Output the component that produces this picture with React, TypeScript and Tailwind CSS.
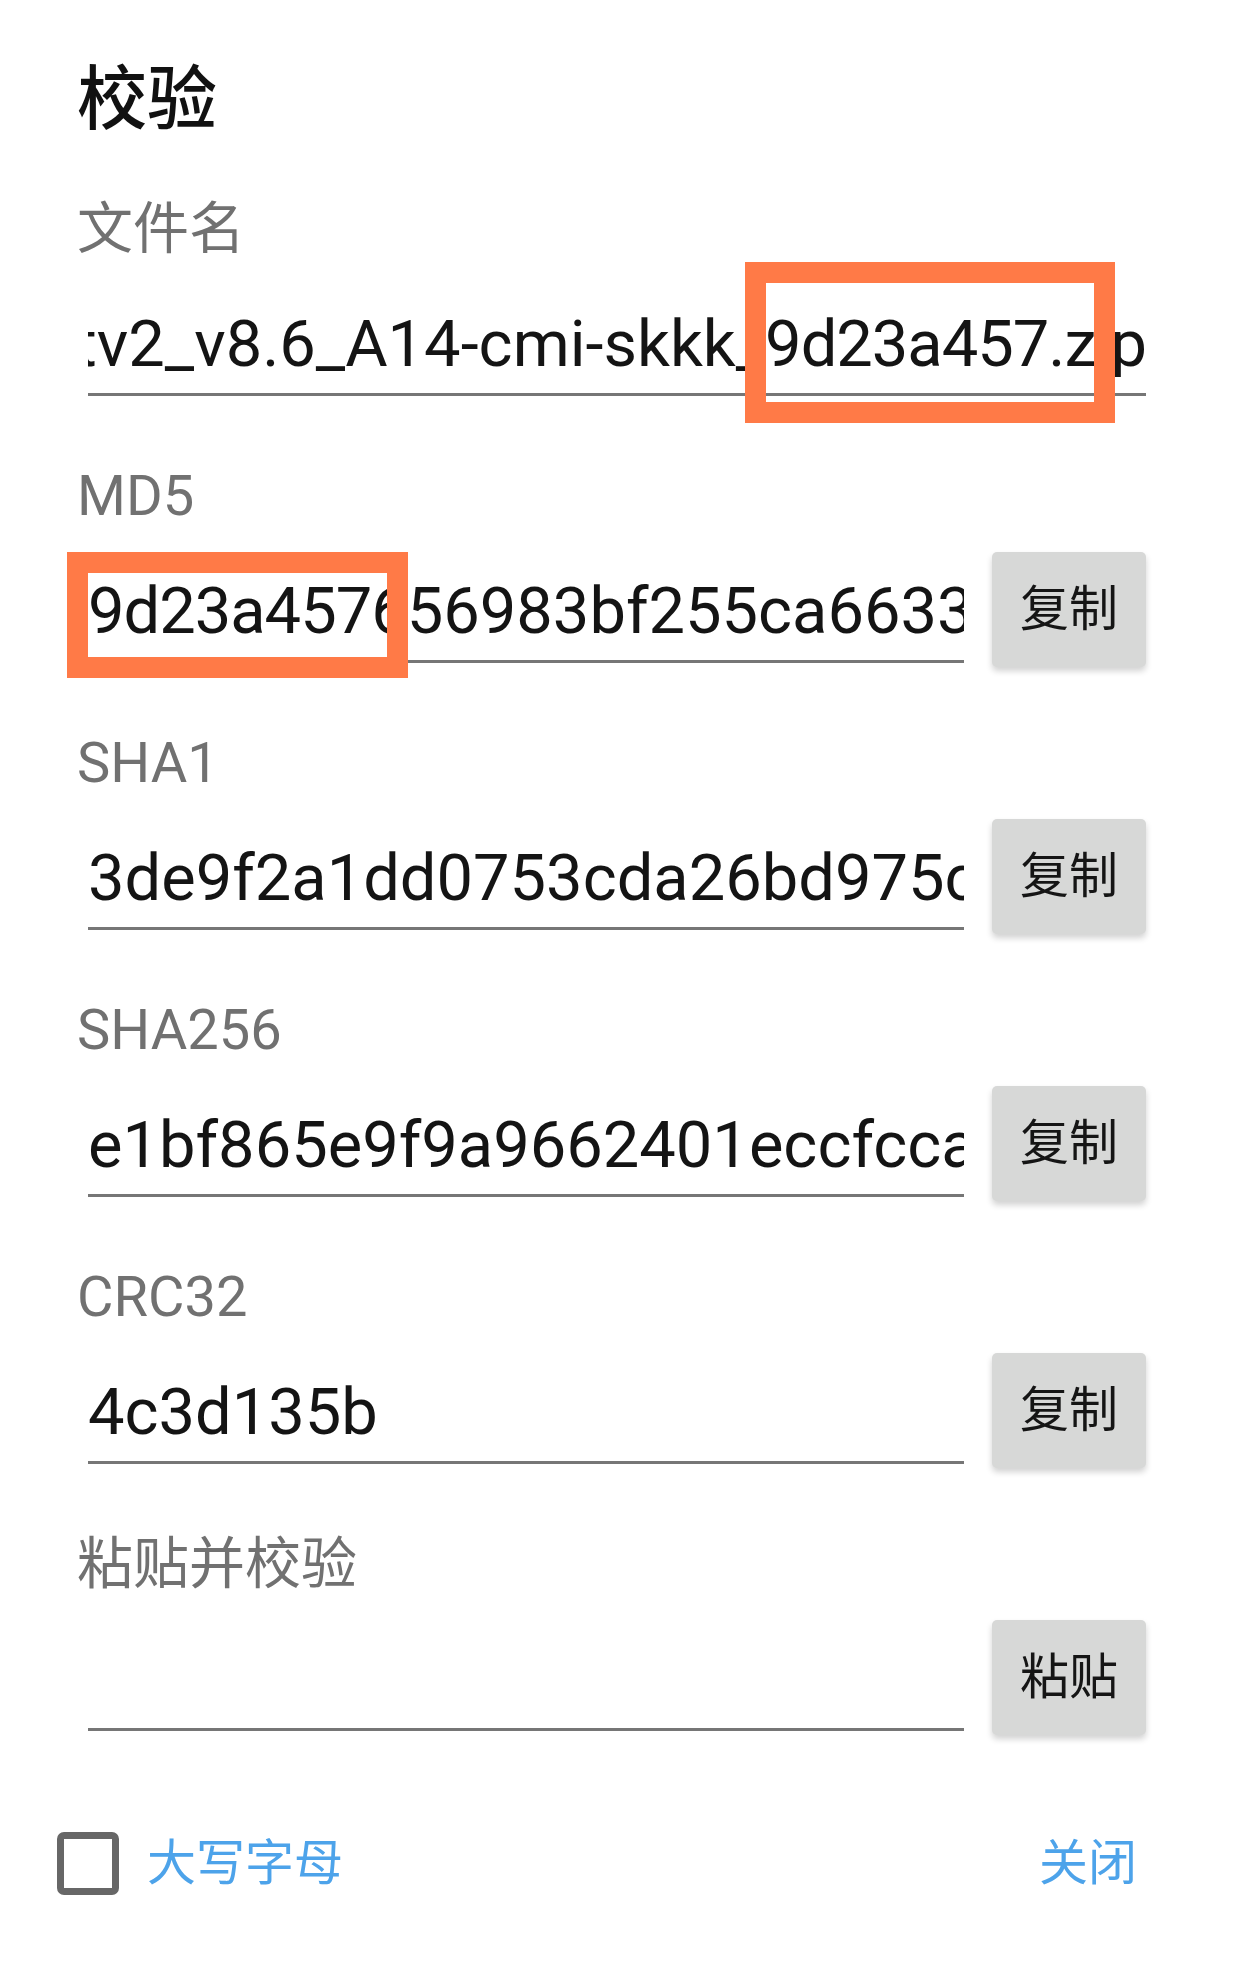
import React from "react";

function Label({ children, mt }: { children: React.ReactNode; mt: string }) {
  return (
    <div className={`${mt} h-[56px] text-[56px] leading-[56px] text-[#717171] whitespace-nowrap`}>
      {children}
    </div>
  );
}

function Field({ children, alignEnd }: { children: React.ReactNode; alignEnd?: boolean }) {
  return (
    <div className="flex-1 min-w-0 ml-[11px] h-[115px] pt-[27px]">
      <div
        className={`h-[65px] overflow-hidden whitespace-nowrap flex ${alignEnd ? "justify-end" : "justify-start"} text-[65px] leading-[65px] text-[#141414]`}
      >
        <span className="shrink-0">{children}</span>
      </div>
      <div className="mt-[16px] h-[3px] bg-[#767676]" />
    </div>
  );
}

function Btn({ children }: { children: React.ReactNode }) {
  return (
    <div className="ml-[28px] w-[154px] h-[115px] shrink-0 rounded-[5px] bg-[#d7d8d7] shadow-[0_4px_6px_rgba(0,0,0,0.18)] flex items-center justify-center text-[49px] leading-[49px] text-[#151515]">
      {children}
    </div>
  );
}

function Section({
  label,
  children,
  btn,
  first,
  alignEnd,
}: {
  label: string;
  children?: React.ReactNode;
  btn?: string;
  first?: boolean;
  alignEnd?: boolean;
}) {
  return (
    <div>
      <Label mt={first ? "mt-[66px]" : "mt-[68px]"}>{label}</Label>
      <div className="mt-[28px] flex h-[115px]">
        <Field alignEnd={alignEnd}>{children}</Field>
        {btn ? <Btn>{btn}</Btn> : null}
      </div>
    </div>
  );
}

export default function App() {
  return (
    <div className="relative w-[1238px] h-[1966px] bg-white overflow-hidden font-['Roboto','Noto_Sans_CJK_SC',sans-serif]">
      <div className="pl-[77px] pr-[92px] pt-[65px]">
        <div className="h-[70px] text-[70px] leading-[70px] font-medium text-[#111111]">校验</div>
        <Section first label="文件名" alignEnd>
          <span>Kernel_SukiSU_Ultra_ktv2_v8.6_A14-cmi-skkk_</span>
          <span className="tracking-[-1px]">9d23a457.zip</span>
        </Section>
        <Section label="MD5" btn="复制">
          <span className="tracking-[-1px]">9d23a4576</span>
          <span>56983bf255ca66335e1c0a4</span>
        </Section>
        <Section label="SHA1" btn="复制">
          3de9f2a1dd0753cda26bd975c4e1b8a07f29d3c6
        </Section>
        <Section label="SHA256" btn="复制">
          e1bf865e9f9a9662401eccfcca7d3b0e5f2a1c94b6d8e07a3f5c29d1e4b7a0c8
        </Section>
        <Section label="CRC32" btn="复制">
          4c3d135b
        </Section>
        <Section label="粘贴并校验" btn="粘贴" />
      </div>

      <div className="mt-[97px] pl-[57px] pr-[101px] flex items-center justify-between h-[63px]">
        <div className="flex items-center">
          <div className="w-[62px] h-[63px] rounded-[7px] border-[7px] border-[#676767]" />
          <span className="ml-[28px] text-[49px] leading-[49px] text-[#4da3ea]">大写字母</span>
        </div>
        <span className="text-[49px] leading-[49px] text-[#4da3ea]">关闭</span>
      </div>

      <div className="absolute left-[745px] top-[262px] w-[370px] h-[161px] border-[21px] border-[#ff7a47]" />
      <div className="absolute left-[67px] top-[552px] w-[341px] h-[126px] border-[21px] border-[#ff7a47]" />
    </div>
  );
}
